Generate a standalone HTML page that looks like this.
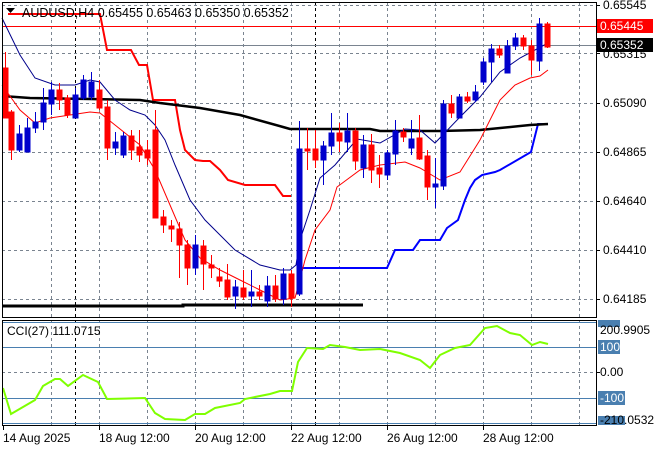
<!DOCTYPE html>
<html><head><meta charset="utf-8"><style>
body{margin:0;background:#fff;width:660px;height:450px;overflow:hidden}
svg{display:block}
text{font-family:"Liberation Sans",sans-serif;font-size:12px;fill:#000}
</style></head><body>
<svg width="660" height="450" viewBox="0 0 660 450" xmlns="http://www.w3.org/2000/svg">
<rect width="660" height="450" fill="#fff"/>
<g stroke="#7a8490" stroke-dasharray="3,3" stroke-width="1">
<path d="M51.5 2V317M99.5 2V317M147.5 2V317M195.5 2V317M243.5 2V317M291.5 2V317M339.5 2V317M387.5 2V317M435.5 2V317M483.5 2V317M531.5 2V317M579.5 2V317"/>
<path d="M51.5 320V425M99.5 320V425M147.5 320V425M195.5 320V425M243.5 320V425M291.5 320V425M339.5 320V425M387.5 320V425M435.5 320V425M483.5 320V425M531.5 320V425M579.5 320V425"/>
<path d="M2 5.5H596M2 53.5H596M2 103.5H596M2 152.5H596M2 201.5H596M2 250.5H596M2 299.5H596M2 372.5H596"/>
</g>
<g stroke="#000" stroke-dasharray="3,3"><path d="M75.5 2V317M315.5 2V317M75.5 320V425M315.5 320V425"/></g>
<path d="M2 45.5H596" stroke="#7a8490"/>
<path d="M2 26.5H596" stroke="#f00"/>
<g stroke="#4a7fb0"><path d="M2 322.5H596M2 347.5H596M2 398.5H596M2 423.5H596"/></g>

<polyline fill="none" stroke="#f00" stroke-width="2" points="8,14 100,14 107,50 131,50 139,65 147,65 153,100 175,100 180,130 185,150 195,160 203,161 210,161 220,170 228,180 245,185 275,185 283,196 291,196"/>
<polyline fill="none" stroke="#00f" stroke-width="2" points="300,268 387,268 395,250 413,250 420,240 440,240 447,228 458,220 465,200 470,188 475,180 482,175 495,172 500,170 531,152 538,124 548,124"/>
<polyline fill="none" stroke="#000" stroke-width="3" points="2,306 183,306 183,305 363,305"/>
<polyline fill="none" stroke="#000" stroke-width="2.5" points="2,96 30,98 90,99 140,100 160,103 200,108 240,115 283,127 290,129 370,129 380,131 440,131 480,130 530,125 548,124"/>
<polyline fill="none" stroke="#00008b" stroke-width="1" points="2,18 20,55 35,78 55,85 75,85 90,80 100,82 115,100 130,110 145,115 155,125 165,140 175,165 190,200 205,220 235,250 260,265 280,270 290,270 296,265 300,240 310,210 320,178 335,165 357,139 380,143 405,129 420,130 435,143 460,117 480,97 500,72 520,58 548,43"/>
<polyline fill="none" stroke="#f00" stroke-width="1" points="2,85 20,110 35,123 50,118 70,115 90,112 100,113 115,125 140,145 155,170 170,205 185,240 200,258 220,270 240,280 260,290 280,300 295,298 305,260 315,230 330,210 337,187 360,170 380,165 405,162 420,168 440,180 460,172 480,140 500,100 515,85 530,78 540,76 548,70"/>

<g stroke-width="1">
<g stroke="#f00" fill="#f00">
<path d="M5.5 52V118M11.5 110V160M59.5 83V110M67.5 95V118M99.5 80V110M107.5 100V160M131.5 130V160M139.5 130V162M147.5 140V165M155.5 110V218M163.5 210V233M171.5 220V242M179.5 222V278M187.5 240V285M203.5 240V290M211.5 255V278M219.5 268V287M227.5 264V300M243.5 270V300M259.5 285V300M275.5 275V302M291.5 270V307M307.5 128V170M315.5 130V168M339.5 123V152M355.5 128V170M371.5 134V183M379.5 155V188M403.5 128V142M419.5 115V160M427.5 150V200M451.5 95V118M467.5 92V103M499.5 45V58M523.5 35V50M531.5 40V75M547.5 22V48"/>
<rect x="3" y="68" width="5" height="50"/><rect x="9" y="112" width="5" height="38"/><rect x="57" y="90" width="5" height="10"/><rect x="65" y="98" width="5" height="17"/><rect x="97" y="90" width="5" height="18"/><rect x="105" y="107" width="5" height="41"/><rect x="129" y="136" width="5" height="14"/><rect x="137" y="147" width="5" height="8"/><rect x="145" y="150" width="5" height="8"/><rect x="153" y="130" width="5" height="88"/><rect x="161" y="217" width="5" height="8"/><rect x="169" y="226" width="5" height="3"/><rect x="177" y="229" width="5" height="16"/><rect x="185" y="245" width="5" height="23"/><rect x="201" y="246" width="5" height="18"/><rect x="209" y="265" width="5" height="3"/><rect x="217" y="277" width="5" height="4"/><rect x="225" y="280" width="5" height="17"/><rect x="241" y="288" width="5" height="9"/><rect x="257" y="292" width="5" height="4"/><rect x="273" y="286" width="5" height="13"/><rect x="289" y="274" width="5" height="24"/><rect x="305" y="149" width="5" height="2"/><rect x="313" y="149" width="5" height="11"/><rect x="337" y="133" width="5" height="8"/><rect x="353" y="131" width="5" height="30"/><rect x="369" y="145" width="5" height="25"/><rect x="377" y="168" width="5" height="6"/><rect x="401" y="132" width="5" height="5"/><rect x="417" y="138" width="5" height="21"/><rect x="425" y="156" width="5" height="31"/><rect x="449" y="104" width="5" height="9"/><rect x="465" y="97" width="5" height="4"/><rect x="497" y="49" width="5" height="6"/><rect x="521" y="38" width="5" height="8"/><rect x="529" y="46" width="5" height="14"/><rect x="545" y="24" width="5" height="23"/>
</g>
<g stroke="#00c" fill="#00c">
<path d="M19.5 125V152M27.5 118V152M35.5 112V133M43.5 88V130M51.5 82V115M75.5 88V118M83.5 75V100M91.5 72V100M115.5 132V155M123.5 132V158M195.5 235V275M235.5 280V309M251.5 270V307M267.5 276V307M283.5 268V305M299.5 121V296M323.5 141V185M331.5 113V155M347.5 113V152M363.5 135V178M387.5 150V180M395.5 120V165M411.5 120V155M435.5 158V208M443.5 100V190M459.5 94V118M475.5 85V102M483.5 58V85M491.5 44V82M507.5 40V73M515.5 33V50M539.5 18V71"/>
<rect x="17" y="134" width="5" height="16"/><rect x="25" y="128" width="5" height="24"/><rect x="33" y="122" width="5" height="6"/><rect x="41" y="103" width="5" height="19"/><rect x="49" y="90" width="5" height="14"/><rect x="73" y="95" width="5" height="23"/><rect x="81" y="80" width="5" height="18"/><rect x="89" y="82" width="5" height="15"/><rect x="113" y="142" width="5" height="6"/><rect x="121" y="136" width="5" height="19"/><rect x="193" y="245" width="5" height="23"/><rect x="233" y="287" width="5" height="9"/><rect x="249" y="292" width="5" height="4"/><rect x="265" y="286" width="5" height="15"/><rect x="281" y="274" width="5" height="25"/><rect x="297" y="149" width="5" height="145"/><rect x="321" y="146" width="5" height="14"/><rect x="329" y="133" width="5" height="13"/><rect x="345" y="131" width="5" height="11"/><rect x="361" y="145" width="5" height="23"/><rect x="385" y="153" width="5" height="22"/><rect x="393" y="131" width="5" height="23"/><rect x="409" y="139" width="5" height="9"/><rect x="433" y="184" width="5" height="3"/><rect x="441" y="104" width="5" height="82"/><rect x="457" y="97" width="5" height="21"/><rect x="473" y="92" width="5" height="8"/><rect x="481" y="62" width="5" height="20"/><rect x="489" y="49" width="5" height="13"/><rect x="505" y="46" width="5" height="27"/><rect x="513" y="38" width="5" height="8"/><rect x="537" y="24" width="5" height="37"/>
</g>
</g>

<polyline fill="none" stroke="#7fff00" stroke-width="2" points="3,388 11,414 35,400 43,386 55,379 60,379 68,386 83,375 98,382 107,399 145,398 155,413 165,419 185,420 195,414 205,414 215,408 240,403 245,399 270,394 280,391 292,391 298,362 307,348 323,349 330,345 345,347 360,350 380,349 400,353 420,360 430,368 440,355 455,348 470,345 485,328 497,326 510,333 520,335 532,345 540,342 548,344"/>

<rect x="2.5" y="2.5" width="594" height="315" fill="none" stroke="#000"/>
<rect x="2.5" y="320.5" width="594" height="105" fill="none" stroke="#000"/>

<path d="M6 8h9l-4.5 5z" fill="#000"/>
<text x="22" y="17" style="font-size:12.5px">AUDUSD,H4  0.65455 0.65463 0.65350 0.65352</text>
<text x="7" y="335">CCI(27) 111.0715</text>

<g stroke="#000"><path d="M596 5.5h4M596 53.5h4M596 103.5h4M596 152.5h4M596 201.5h4M596 250.5h4M596 299.5h4M596 372.5h4"/></g>
<text x="603" y="9">0.65545</text>
<text x="603" y="58">0.65315</text>
<text x="603" y="107">0.65090</text>
<text x="603" y="156">0.64865</text>
<text x="603" y="205">0.64640</text>
<text x="603" y="254">0.64410</text>
<text x="603" y="303">0.64185</text>
<rect x="597" y="19" width="56" height="14" fill="#f00"/>
<text x="600" y="30" style="fill:#fff">0.65445</text>
<rect x="597" y="38" width="56" height="14" fill="#000"/>
<text x="600" y="49" style="fill:#fff">0.65352</text>
<rect x="598" y="320" width="22" height="7" fill="#4a7fb0"/>
<text x="600" y="334">200.9905</text>
<rect x="598" y="340" width="22" height="14" fill="#4a7fb0"/>
<text x="600" y="351" style="fill:#fff">100</text>
<text x="600" y="376">0.00</text>
<rect x="598" y="391" width="27" height="14" fill="#4a7fb0"/>
<text x="600" y="402" style="fill:#fff">-100</text>
<rect x="598" y="416" width="27" height="9" fill="#4a7fb0"/>
<text x="600" y="424">-210.0532</text>

<g stroke="#000"><path d="M3.5 425v5M99.5 425v5M195.5 425v5M291.5 425v5M387.5 425v5M483.5 425v5"/></g>
<text x="3" y="442">14 Aug 2025</text>
<text x="99" y="442">18 Aug 12:00</text>
<text x="195" y="442">20 Aug 12:00</text>
<text x="291" y="442">22 Aug 12:00</text>
<text x="387" y="442">26 Aug 12:00</text>
<text x="483" y="442">28 Aug 12:00</text>
</svg>
</body></html>
